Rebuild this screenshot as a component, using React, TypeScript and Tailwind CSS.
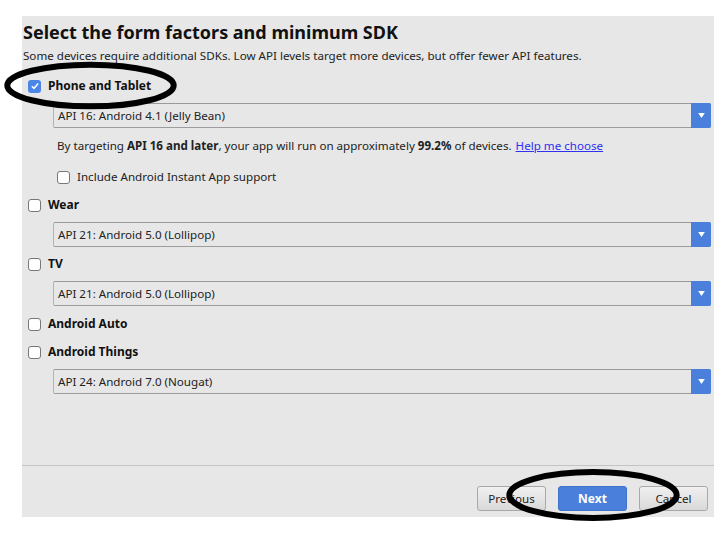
import * as React from 'react';

const font = { fontFamily: '"Noto Sans", "Open Sans", sans-serif' };

function Checkbox({ checked = false }: { checked?: boolean }) {
  if (checked) {
    return (
      <span className="flex h-[13px] w-[13px] shrink-0 items-center justify-center rounded-[3px] bg-[#4a86e8]">
        <svg viewBox="0 0 12 12" className="h-[10px] w-[10px]">
          <path d="M2.2 6.2 L4.8 8.8 L9.8 3" fill="none" stroke="#fff" strokeWidth="1.8" />
        </svg>
      </span>
    );
  }
  return <span className="h-[13px] w-[13px] shrink-0 rounded-[3px] border border-[#777] bg-white" />;
}

function Dropdown({ value, className = '' }: { value: string; className?: string }) {
  return (
    <div
      className={`ml-[31px] mr-[3px] flex h-[25px] items-stretch rounded-[2px] border border-[#b4b4b4] border-t-[#999] border-b-[#9c9c9c] bg-[#e7e7e7] ${className}`}
    >
      <div className="flex flex-1 items-center pl-[4px] text-[11.6px] text-[#222]">{value}</div>
      <div className="-my-px -mr-px flex w-[20px] items-center justify-center rounded-r-[2px] bg-[#4a7fdb]">
        <svg viewBox="0 0 8 6" className="h-[5px] w-[7px]">
          <path d="M0 0 H8 L4 6 Z" fill="#fff" />
        </svg>
      </div>
    </div>
  );
}

function Option({ label, checked, className = '' }: { label: string; checked?: boolean; className?: string }) {
  return (
    <div className={`flex h-[20px] items-center gap-[7px] pl-[6px] ${className}`}>
      <Checkbox checked={checked} />
      <span className="text-[12px] font-bold text-[#111]">{label}</span>
    </div>
  );
}

function Ellipse({ className }: { className: string }) {
  return (
    <svg className={`pointer-events-none absolute ${className}`} viewBox="0 0 100 40" preserveAspectRatio="none">
      <ellipse cx="50" cy="20" rx="47" ry="17" fill="none" stroke="#000" strokeWidth="6" vectorEffect="non-scaling-stroke" />
    </svg>
  );
}

export default function App() {
  return (
    <div className="relative h-[534px] w-[728px] bg-white pt-[16px]" style={font}>
      <div className="ml-[22px] flex h-[501px] w-[692px] flex-col bg-[#e7e7e7]">
        <h1 className="pl-[1px] pt-[4px] text-[18px] font-bold leading-[24px] text-[#111]">
          Select the form factors and minimum SDK
        </h1>
        <p className="mt-[4px] pl-[1px] text-[11.6px] leading-[16px] text-[#222]">
          Some devices require additional SDKs. Low API levels target more devices, but offer fewer API features.
        </p>

        <Option label="Phone and Tablet" checked className="mt-[12px]" />
        <Dropdown value="API 16: Android 4.1 (Jelly Bean)" className="mt-[7px]" />
        <p className="mt-[10px] pl-[35px] text-[11.6px] leading-[16px] text-[#222]">
          By targeting <b>API 16 and later</b>, your app will run on approximately <b>99.2%</b> of devices.
          <span className="ml-[4px] text-[#3030f0] underline">Help me choose</span>
        </p>
        <div className="mt-[13px] flex h-[20px] items-center gap-[7px] pl-[35px]">
          <Checkbox />
          <span className="text-[11.6px] text-[#222]">Include Android Instant App support</span>
        </div>

        <Option label="Wear" className="mt-[8px]" />
        <Dropdown value="API 21: Android 5.0 (Lollipop)" className="mt-[7px]" />
        <Option label="TV" className="mt-[7px]" />
        <Dropdown value="API 21: Android 5.0 (Lollipop)" className="mt-[7px]" />
        <Option label="Android Auto" className="mt-[8px]" />
        <Option label="Android Things" className="mt-[8px]" />
        <Dropdown value="API 24: Android 7.0 (Nougat)" className="mt-[7px]" />

        <div className="flex-1" />
        <div className="flex h-[52px] justify-end gap-[12px] border-t border-[#c4c4c4] pr-[6px] pt-[20px]">
          <button className="h-[25px] w-[69px] rounded-[3px] border border-[#a8a8a8] bg-gradient-to-b from-[#f0f0f0] to-[#d9d9d9] text-[11.6px] text-[#222]">
            Previous
          </button>
          <button className="h-[25px] w-[69px] rounded-[3px] border border-[#3f72c9] bg-[#4a80dc] text-[12px] font-bold text-white">
            Next
          </button>
          <button className="h-[25px] w-[69px] rounded-[3px] border border-[#a8a8a8] bg-gradient-to-b from-[#f0f0f0] to-[#d9d9d9] text-[11.6px] text-[#222]">
            Cancel
          </button>
        </div>
      </div>

      <Ellipse className="left-[2px] top-[61px] h-[49px] w-[177px]" />
      <Ellipse className="left-[504px] top-[468px] h-[54px] w-[178px]" />
    </div>
  );
}
